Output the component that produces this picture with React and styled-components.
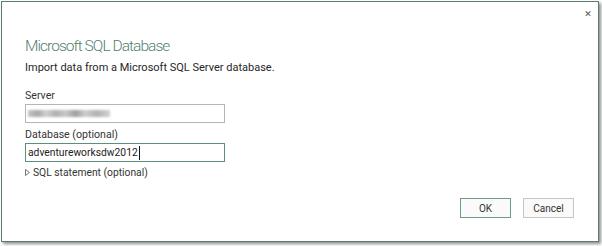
import styled, { createGlobalStyle } from "styled-components";

const GlobalStyle = createGlobalStyle`
  html, body {
    margin: 0;
    padding: 0;
    background: #ffffff;
  }
  body {
    font-family: Roboto, "Open Sans", sans-serif;
    color: #333333;
  }
`;

const Page = styled.div`
  width: 602px;
  height: 246px;
  padding: 1px 0 0 1px;
  box-sizing: border-box;
`;

const Dialog = styled.div`
  width: 598px;
  height: 241px;
  box-sizing: border-box;
  border: 1px solid #5d7d70;
  background: #ffffff;
  box-shadow: 2px 2px 3px rgba(0, 0, 0, 0.45);
  display: flex;
  flex-direction: column;
  padding: 0 23px 0 23px;
`;

const TopBar = styled.div`
  display: flex;
  justify-content: flex-end;
  height: 31px;
  margin-right: -18px;
`;

const Close = styled.button`
  border: none;
  background: none;
  padding: 0;
  margin-top: 7px;
  width: 10px;
  height: 10px;
  font-family: "DejaVu Sans", sans-serif;
  font-size: 9px;
  font-weight: bold;
  line-height: 10px;
  color: #555555;
`;

const Title = styled.h1`
  margin: 1px 0 0;
  font-size: 15.5px;
  line-height: 24px;
  font-weight: 300;
  letter-spacing: -0.95px;
  color: #527f70;
`;

const Subtitle = styled.p`
  margin: 0;
  font-size: 11px;
  line-height: 19px;
  color: #262626;
`;

const Label = styled.label`
  display: block;
  margin-top: ${(p) => p.$gap}px;
  font-size: 10.6px;
  line-height: 15px;
  color: #333333;
`;

const Input = styled.div`
  margin-top: 1px;
  width: 200px;
  height: 19px;
  box-sizing: border-box;
  border: 1px solid ${(p) => (p.$focused ? "#5e8f7c" : "#b5b5b5")};
  padding: 0 2px;
  display: flex;
  align-items: center;
  font-size: 10.3px;
  color: #222222;
`;

const Blurred = styled.span`
  display: inline-block;
  width: 82px;
  height: 7px;
  background: linear-gradient(
    90deg,
    #c4c4c4,
    #a9a9a9 12%,
    #d0d0d0 22%,
    #b0b0b0 34%,
    #c8c8c8 46%,
    #9f9f9f 58%,
    #cdcdcd 70%,
    #b3b3b3 84%,
    #d2d2d2
  );
  filter: blur(1px);
`;

const Caret = styled.span`
  display: inline-block;
  width: 1px;
  height: 14px;
  background: #111111;
  margin-left: 1px;
`;

const Expander = styled.div`
  margin-top: 3px;
  display: flex;
  align-items: center;
  gap: 3px;
  font-size: 10.3px;
  line-height: 15px;
  color: #333333;
`;

const Footer = styled.div`
  margin-top: auto;
  margin-right: 1px;
  padding-bottom: 23px;
  display: flex;
  justify-content: flex-end;
  gap: 12px;
`;

const Button = styled.button`
  width: 51px;
  height: 20px;
  box-sizing: border-box;
  border: 1px solid ${(p) => (p.$primary ? "#6a9a88" : "#c6c6c6")};
  background: #fafafa;
  font-family: Roboto, "Open Sans", sans-serif;
  font-size: 10px;
  color: #333333;
  padding: 0;
`;

const App = () => {
  return (
    <Page>
      <GlobalStyle />
      <Dialog>
        <TopBar>
          <Close>✕</Close>
        </TopBar>
        <Title>Microsoft SQL Database</Title>
        <Subtitle>Import data from a Microsoft SQL Server database.</Subtitle>
        <Label $gap={11}>Server</Label>
        <Input>
          <Blurred />
        </Input>
        <Label $gap={4}>Database (optional)</Label>
        <Input $focused>
          adventureworksdw2012
          <Caret />
        </Input>
        <Expander>
          <svg width="5" height="7" viewBox="0 0 5 7">
            <path d="M0.5 0.5 L4.5 3.5 L0.5 6.5 Z" fill="none" stroke="#777" strokeWidth="1" />
          </svg>
          SQL statement (optional)
        </Expander>
        <Footer>
          <Button $primary>OK</Button>
          <Button>Cancel</Button>
        </Footer>
      </Dialog>
    </Page>
  );
};

export default App;
